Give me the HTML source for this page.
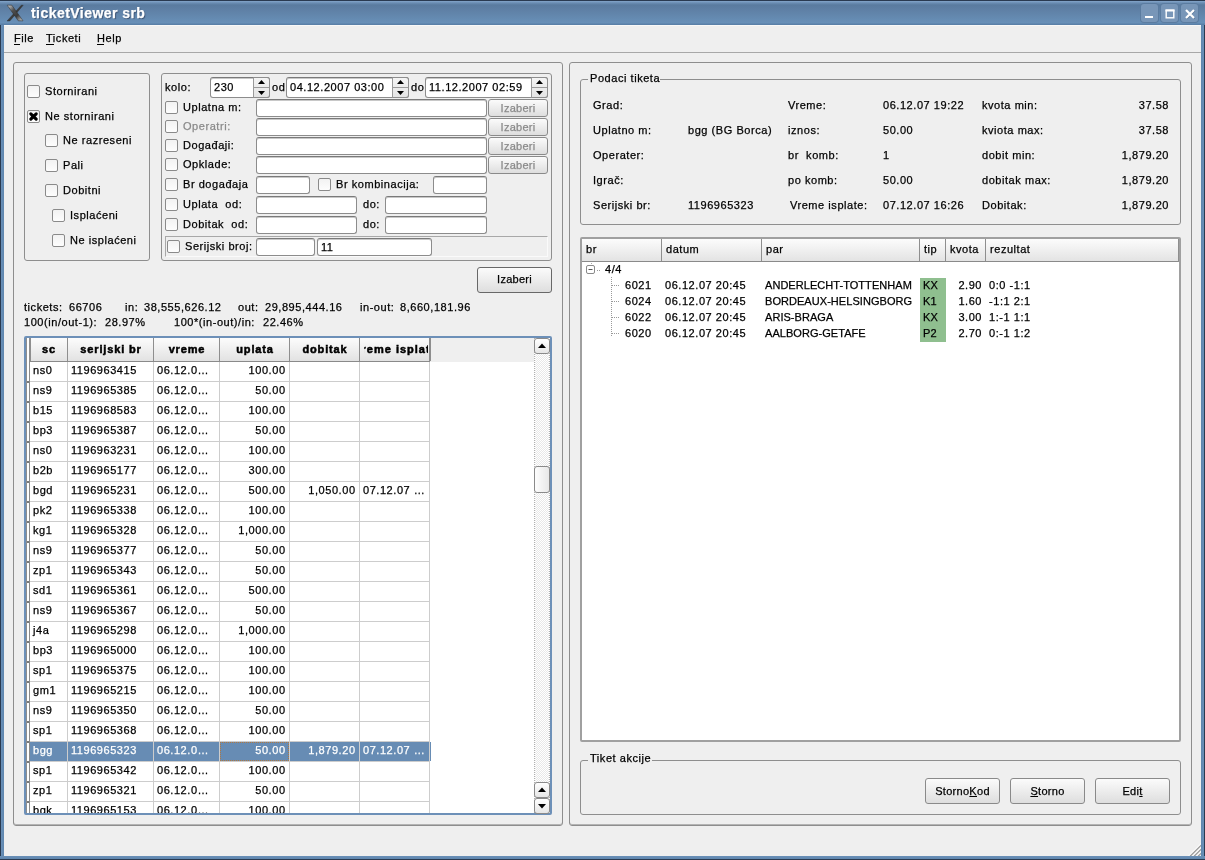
<!DOCTYPE html><html><head><meta charset="utf-8"><style>
html,body{margin:0;padding:0}
body{width:1205px;height:860px;overflow:hidden;position:relative;background:#efefef;font-family:"Liberation Sans",sans-serif;font-size:12px}
.t{position:absolute;white-space:pre;-webkit-text-stroke:0.25px currentColor}
.cb{position:absolute;width:11px;height:11px;border:1px solid #8a8a8a;border-radius:2px;background:linear-gradient(#f2f2f2,#fdfdfd)}
.le{position:absolute;border:1px solid #8c8c8c;border-top-color:#7a7a7a;border-radius:3px;background:#fff;box-shadow:inset 0 1px 0 #c8c8c8}
.btn{position:absolute;border:1px solid #8a8a8a;border-radius:3px;background:linear-gradient(#fbfbfb,#dedede)}
.gb{position:absolute;border:1px solid #8e8e8e;border-radius:3px}
</style></head><body><div style="position:absolute;left:0;top:0;width:1205px;height:860px;will-change:transform">
<div style="position:absolute;left:0px;top:0px;width:1205px;height:25px;background:linear-gradient(#2a3a50 0px,#2a3a50 1px,#83a5ca 1px,#6a8cb2 3px,#5a7b9f 5px,#5e7fa4 9px,#6890b8 23px,#5a80a8 24px,#5a80a8 25px)"></div>
<div style="position:absolute;left:0px;top:25px;width:4px;height:835px;background:linear-gradient(90deg,#2a3a50 0,#2a3a50 1px,#6a90b8 1px,#5f86ae 4px)"></div>
<div style="position:absolute;left:1201px;top:25px;width:4px;height:835px;background:linear-gradient(90deg,#5f86ae 0,#6a90b8 3px,#2a3a50 3px)"></div>
<div style="position:absolute;left:0px;top:856px;width:1205px;height:4px;background:linear-gradient(#6a90b8 0,#5f86ae 3px,#2a3a50 3px)"></div>
<div style="position:absolute;left:4px;top:25px;width:1197px;height:1px;background:#f8f8f8"></div>
<svg style="position:absolute;left:0px;top:0px" width="30" height="25"><defs><linearGradient id="xg" x1="0" y1="0" x2="1" y2="1"><stop offset="0" stop-color="#d8d8d8"/><stop offset="0.35" stop-color="#505050"/><stop offset="0.65" stop-color="#3a3a3a"/><stop offset="1" stop-color="#cfcfcf"/></linearGradient></defs><path d="M21.3 5.2 L23.2 5.2 L9.8 21 L7 21 Z" fill="#3c3c3c" stroke="#2a2a2a" stroke-width="0.4"/><path d="M7.2 5.2 L11.8 5.2 L23 20.8 L18.3 20.8 Z" fill="url(#xg)" stroke="#2a2a2a" stroke-width="0.5"/></svg>
<div class="t" style="left:31px;top:6px;font:bold 14px/14px 'Liberation Sans',sans-serif;color:#fff;letter-spacing:0.45px;text-shadow:1px 1px 1px #3a5070">ticketViewer srb</div>
<div style="position:absolute;left:1141px;top:4px;width:17px;height:18px;background:#7896b8;border-radius:3px;box-shadow:0 0 0 1px #5b7ca0"></div>
<div style="position:absolute;left:1161px;top:4px;width:17px;height:18px;background:#7896b8;border-radius:3px;box-shadow:0 0 0 1px #5b7ca0"></div>
<div style="position:absolute;left:1181px;top:4px;width:17px;height:18px;background:#7896b8;border-radius:3px;box-shadow:0 0 0 1px #5b7ca0"></div>
<svg style="position:absolute;left:1141px;top:4px" width="17" height="18"><rect x="4" y="12" width="8" height="2" fill="#fff"/></svg>
<svg style="position:absolute;left:1161px;top:4px" width="17" height="18"><rect x="5.2" y="6.2" width="7.6" height="7.6" fill="none" stroke="#fff" stroke-width="1.4"/><rect x="4.5" y="5.5" width="9" height="2" fill="#fff"/></svg>
<svg style="position:absolute;left:1181px;top:4px" width="17" height="18"><path d="M5 6 L13 14 M13 6 L5 14" stroke="#3e5a7a" stroke-width="2" transform="translate(0.6,0.6)" opacity="0.5"/><path d="M5 6 L13 14 M13 6 L5 14" stroke="#fff" stroke-width="2.2"/></svg>
<div class="t" style="left:14px;top:33px;font:normal 11px/11px 'Liberation Sans',sans-serif;color:#000;letter-spacing:0.55px;">File</div>
<div style="position:absolute;left:14px;top:44px;width:6px;height:1px;background:#000"></div>
<div class="t" style="left:46px;top:33px;font:normal 11px/11px 'Liberation Sans',sans-serif;color:#000;letter-spacing:0.55px;">Ticketi</div>
<div style="position:absolute;left:46px;top:44px;width:8px;height:1px;background:#000"></div>
<div class="t" style="left:97px;top:33px;font:normal 11px/11px 'Liberation Sans',sans-serif;color:#000;letter-spacing:0.55px;">Help</div>
<div style="position:absolute;left:97px;top:44px;width:7px;height:1px;background:#000"></div>
<div style="position:absolute;left:4px;top:52px;width:1197px;height:1px;background:#a8a8a8"></div>
<div class="gb" style="left:13px;top:62px;width:548px;height:762px;box-shadow:inset 0 -1px 0 #b4b4b4"></div>
<div class="gb" style="left:24px;top:73px;width:124px;height:186px;"></div>
<div class="cb" style="left:27px;top:85px"></div>
<div class="t" style="left:45px;top:86px;font:normal 11px/11px 'Liberation Sans',sans-serif;color:#000;letter-spacing:0.55px;">Stornirani</div>
<div class="cb" style="left:27px;top:110px"><svg width="13" height="13" style="position:absolute;left:-1px;top:-1px"><path d="M3.8 3.8 L9.2 9.2 M9.2 3.8 L3.8 9.2" stroke="#000" stroke-width="3.1" stroke-linecap="round"/></svg></div>
<div class="t" style="left:45px;top:111px;font:normal 11px/11px 'Liberation Sans',sans-serif;color:#000;letter-spacing:0.55px;">Ne stornirani</div>
<div class="cb" style="left:45px;top:134px"></div>
<div class="t" style="left:63px;top:135px;font:normal 11px/11px 'Liberation Sans',sans-serif;color:#000;letter-spacing:0.55px;">Ne razreseni</div>
<div class="cb" style="left:45px;top:159px"></div>
<div class="t" style="left:63px;top:160px;font:normal 11px/11px 'Liberation Sans',sans-serif;color:#000;letter-spacing:0.55px;">Pali</div>
<div class="cb" style="left:45px;top:184px"></div>
<div class="t" style="left:63px;top:185px;font:normal 11px/11px 'Liberation Sans',sans-serif;color:#000;letter-spacing:0.55px;">Dobitni</div>
<div class="cb" style="left:52px;top:209px"></div>
<div class="t" style="left:70px;top:210px;font:normal 11px/11px 'Liberation Sans',sans-serif;color:#000;letter-spacing:0.55px;">Isplaćeni</div>
<div class="cb" style="left:52px;top:234px"></div>
<div class="t" style="left:70px;top:235px;font:normal 11px/11px 'Liberation Sans',sans-serif;color:#000;letter-spacing:0.55px;">Ne isplaćeni</div>
<div class="gb" style="left:161px;top:73px;width:389px;height:186px;"></div>
<div class="t" style="left:165px;top:82px;font:normal 11px/11px 'Liberation Sans',sans-serif;color:#000;letter-spacing:0.55px;">kolo:</div>
<div class="le" style="left:210px;top:77px;width:58px;height:19px"></div>
<div style="position:absolute;left:253px;top:77px;width:15px;height:19px;border:1px solid #8e8e8e;border-left:1px solid #9a9a9a;border-radius:0 3px 3px 0;background:linear-gradient(#f4f4f4,#e4e4e4)"></div>
<div style="position:absolute;left:253px;top:87px;width:16px;height:1px;background:#9a9a9a"></div>
<svg style="position:absolute;left:253px;top:77px" width="17" height="21"><path d="M5.0 7 L12.0 7 L8.5 3 Z" fill="#000"/><path d="M5.0 14 L12.0 14 L8.5 18 Z" fill="#000"/></svg>
<div class="t" style="left:214px;top:82px;font:normal 11px/11px 'Liberation Sans',sans-serif;color:#000;letter-spacing:0.55px;">230</div>
<div class="t" style="left:272px;top:82px;font:normal 11px/11px 'Liberation Sans',sans-serif;color:#000;letter-spacing:0.55px;">od</div>
<div class="le" style="left:286px;top:77px;width:121px;height:19px"></div>
<div style="position:absolute;left:392px;top:77px;width:15px;height:19px;border:1px solid #8e8e8e;border-left:1px solid #9a9a9a;border-radius:0 3px 3px 0;background:linear-gradient(#f4f4f4,#e4e4e4)"></div>
<div style="position:absolute;left:392px;top:87px;width:16px;height:1px;background:#9a9a9a"></div>
<svg style="position:absolute;left:392px;top:77px" width="17" height="21"><path d="M5.0 7 L12.0 7 L8.5 3 Z" fill="#000"/><path d="M5.0 14 L12.0 14 L8.5 18 Z" fill="#000"/></svg>
<div class="t" style="left:290px;top:82px;font:normal 11px/11px 'Liberation Sans',sans-serif;color:#000;letter-spacing:0.55px;">04.12.2007 03:00</div>
<div class="t" style="left:411px;top:82px;font:normal 11px/11px 'Liberation Sans',sans-serif;color:#000;letter-spacing:0.55px;">do</div>
<div class="le" style="left:425px;top:77px;width:121px;height:19px"></div>
<div style="position:absolute;left:531px;top:77px;width:15px;height:19px;border:1px solid #8e8e8e;border-left:1px solid #9a9a9a;border-radius:0 3px 3px 0;background:linear-gradient(#f4f4f4,#e4e4e4)"></div>
<div style="position:absolute;left:531px;top:87px;width:16px;height:1px;background:#9a9a9a"></div>
<svg style="position:absolute;left:531px;top:77px" width="17" height="21"><path d="M5.0 7 L12.0 7 L8.5 3 Z" fill="#000"/><path d="M5.0 14 L12.0 14 L8.5 18 Z" fill="#000"/></svg>
<div class="t" style="left:429px;top:82px;font:normal 11px/11px 'Liberation Sans',sans-serif;color:#000;letter-spacing:0.55px;">11.12.2007 02:59</div>
<div class="cb" style="left:165px;top:101px"></div>
<div class="t" style="left:183px;top:102px;font:normal 11px/11px 'Liberation Sans',sans-serif;color:#000;letter-spacing:0.55px;">Uplatna m:</div>
<div class="le" style="left:256px;top:99px;width:229px;height:16px"></div>
<div class="btn" style="left:488px;top:99px;width:58px;height:16px;"></div>
<div class="t" style="left:488px;width:60px;text-align:center;top:103px;font:normal 11px/11px 'Liberation Sans',sans-serif;color:#8a8a8a;letter-spacing:0.25px;">Izaberi</div>
<div class="cb" style="left:165px;top:120px"></div>
<div class="t" style="left:183px;top:121px;font:normal 11px/11px 'Liberation Sans',sans-serif;color:#8a8a8a;letter-spacing:0.55px;">Operatri:</div>
<div class="le" style="left:256px;top:118px;width:229px;height:16px"></div>
<div class="btn" style="left:488px;top:118px;width:58px;height:16px;"></div>
<div class="t" style="left:488px;width:60px;text-align:center;top:122px;font:normal 11px/11px 'Liberation Sans',sans-serif;color:#8a8a8a;letter-spacing:0.25px;">Izaberi</div>
<div class="cb" style="left:165px;top:139px"></div>
<div class="t" style="left:183px;top:140px;font:normal 11px/11px 'Liberation Sans',sans-serif;color:#000;letter-spacing:0.55px;">Događaji:</div>
<div class="le" style="left:256px;top:137px;width:229px;height:16px"></div>
<div class="btn" style="left:488px;top:137px;width:58px;height:16px;"></div>
<div class="t" style="left:488px;width:60px;text-align:center;top:141px;font:normal 11px/11px 'Liberation Sans',sans-serif;color:#8a8a8a;letter-spacing:0.25px;">Izaberi</div>
<div class="cb" style="left:165px;top:158px"></div>
<div class="t" style="left:183px;top:159px;font:normal 11px/11px 'Liberation Sans',sans-serif;color:#000;letter-spacing:0.55px;">Opklade:</div>
<div class="le" style="left:256px;top:156px;width:229px;height:16px"></div>
<div class="btn" style="left:488px;top:156px;width:58px;height:16px;"></div>
<div class="t" style="left:488px;width:60px;text-align:center;top:160px;font:normal 11px/11px 'Liberation Sans',sans-serif;color:#8a8a8a;letter-spacing:0.25px;">Izaberi</div>
<div class="cb" style="left:165px;top:178px"></div>
<div class="t" style="left:183px;top:179px;font:normal 11px/11px 'Liberation Sans',sans-serif;color:#000;letter-spacing:0.55px;">Br događaja</div>
<div class="le" style="left:256px;top:176px;width:52px;height:16px"></div>
<div class="cb" style="left:318px;top:178px"></div>
<div class="t" style="left:336px;top:179px;font:normal 11px/11px 'Liberation Sans',sans-serif;color:#000;letter-spacing:0.55px;">Br kombinacija:</div>
<div class="le" style="left:433px;top:176px;width:52px;height:16px"></div>
<div class="cb" style="left:165px;top:198px"></div>
<div class="t" style="left:183px;top:199px;font:normal 11px/11px 'Liberation Sans',sans-serif;color:#000;letter-spacing:0.55px;">Uplata  od:</div>
<div class="le" style="left:256px;top:196px;width:99px;height:16px"></div>
<div class="t" style="left:363px;top:199px;font:normal 11px/11px 'Liberation Sans',sans-serif;color:#000;letter-spacing:0.55px;">do:</div>
<div class="le" style="left:385px;top:196px;width:100px;height:16px"></div>
<div class="cb" style="left:165px;top:218px"></div>
<div class="t" style="left:183px;top:219px;font:normal 11px/11px 'Liberation Sans',sans-serif;color:#000;letter-spacing:0.55px;">Dobitak  od:</div>
<div class="le" style="left:256px;top:216px;width:99px;height:16px"></div>
<div class="t" style="left:363px;top:219px;font:normal 11px/11px 'Liberation Sans',sans-serif;color:#000;letter-spacing:0.55px;">do:</div>
<div class="le" style="left:385px;top:216px;width:100px;height:16px"></div>
<div style="position:absolute;left:165px;top:236px;width:381px;height:19px;border-top:1px solid #a8a8a8;border-left:1px solid #a8a8a8;border-bottom:1px solid #fafafa;border-right:1px solid #fafafa"></div>
<div class="cb" style="left:167px;top:240px"></div>
<div class="t" style="left:185px;top:241px;font:normal 11px/11px 'Liberation Sans',sans-serif;color:#000;letter-spacing:0.55px;">Serijski broj:</div>
<div class="le" style="left:256px;top:238px;width:57px;height:16px"></div>
<div class="le" style="left:317px;top:238px;width:113px;height:16px"></div>
<div class="t" style="left:321px;top:242px;font:normal 11px/11px 'Liberation Sans',sans-serif;color:#000;letter-spacing:0.55px;">11</div>
<div class="btn" style="left:477px;top:267px;width:73px;height:24px;border-color:#686868"></div>
<div class="t" style="left:477px;width:75px;text-align:center;top:274px;font:normal 11px/11px 'Liberation Sans',sans-serif;color:#000;letter-spacing:0.25px;">Izaberi</div>
<div class="t" style="left:24px;top:302px;font:normal 11px/11px 'Liberation Sans',sans-serif;color:#000;letter-spacing:0.55px;">tickets:</div>
<div class="t" style="left:69px;top:302px;font:normal 11px/11px 'Liberation Sans',sans-serif;color:#000;letter-spacing:0.55px;">66706</div>
<div class="t" style="left:125px;top:302px;font:normal 11px/11px 'Liberation Sans',sans-serif;color:#000;letter-spacing:0.55px;">in:</div>
<div class="t" style="left:144px;top:302px;font:normal 11px/11px 'Liberation Sans',sans-serif;color:#000;letter-spacing:0.55px;">38,555,626.12</div>
<div class="t" style="left:238px;top:302px;font:normal 11px/11px 'Liberation Sans',sans-serif;color:#000;letter-spacing:0.55px;">out:</div>
<div class="t" style="left:265px;top:302px;font:normal 11px/11px 'Liberation Sans',sans-serif;color:#000;letter-spacing:0.55px;">29,895,444.16</div>
<div class="t" style="left:360px;top:302px;font:normal 11px/11px 'Liberation Sans',sans-serif;color:#000;letter-spacing:0.55px;">in-out:</div>
<div class="t" style="left:400px;top:302px;font:normal 11px/11px 'Liberation Sans',sans-serif;color:#000;letter-spacing:0.55px;">8,660,181.96</div>
<div class="t" style="left:24px;top:317px;font:normal 11px/11px 'Liberation Sans',sans-serif;color:#000;letter-spacing:0.55px;">100(in/out-1):</div>
<div class="t" style="left:105px;top:317px;font:normal 11px/11px 'Liberation Sans',sans-serif;color:#000;letter-spacing:0.55px;">28.97%</div>
<div class="t" style="left:174px;top:317px;font:normal 11px/11px 'Liberation Sans',sans-serif;color:#000;letter-spacing:0.55px;">100*(in-out)/in:</div>
<div class="t" style="left:263px;top:317px;font:normal 11px/11px 'Liberation Sans',sans-serif;color:#000;letter-spacing:0.55px;">22.46%</div>
<div style="position:absolute;left:24px;top:336px;width:528px;height:479px;box-sizing:border-box;border:2px solid #6d90b8;border-radius:2px;background:#fff"></div>
<div style="position:absolute;left:26px;top:338px;width:508px;height:24px;background:#efefef"></div>
<div style="position:absolute;left:26px;top:338px;width:4px;height:475px;background:#fff"></div>
<div style="position:absolute;left:29px;top:338px;width:1px;height:475px;background:#8a8a8a"></div>
<div style="position:absolute;left:26px;top:338px;width:1px;height:475px;background:#8e8e8e"></div>
<div style="position:absolute;left:30px;top:338px;width:38px;height:23px;background:linear-gradient(#fcfcfc,#e2e2e2)"></div>
<div style="position:absolute;left:67px;top:338px;width:2px;height:23px;background:#8e8e8e"></div>
<div class="t" style="left:30px;width:38px;text-align:center;top:344px;font:bold 11px/11px 'Liberation Sans',sans-serif;color:#000;letter-spacing:0.85px;-webkit-text-stroke:0.5px currentColor;">sc</div>
<div style="position:absolute;left:68px;top:338px;width:86px;height:23px;background:linear-gradient(#fcfcfc,#e2e2e2)"></div>
<div style="position:absolute;left:153px;top:338px;width:2px;height:23px;background:#8e8e8e"></div>
<div class="t" style="left:68px;width:86px;text-align:center;top:344px;font:bold 11px/11px 'Liberation Sans',sans-serif;color:#000;letter-spacing:0.85px;-webkit-text-stroke:0.5px currentColor;">serijski br</div>
<div style="position:absolute;left:154px;top:338px;width:66px;height:23px;background:linear-gradient(#fcfcfc,#e2e2e2)"></div>
<div style="position:absolute;left:219px;top:338px;width:2px;height:23px;background:#8e8e8e"></div>
<div class="t" style="left:154px;width:66px;text-align:center;top:344px;font:bold 11px/11px 'Liberation Sans',sans-serif;color:#000;letter-spacing:0.85px;-webkit-text-stroke:0.5px currentColor;">vreme</div>
<div style="position:absolute;left:220px;top:338px;width:70px;height:23px;background:linear-gradient(#fcfcfc,#e2e2e2)"></div>
<div style="position:absolute;left:289px;top:338px;width:2px;height:23px;background:#8e8e8e"></div>
<div class="t" style="left:220px;width:70px;text-align:center;top:344px;font:bold 11px/11px 'Liberation Sans',sans-serif;color:#000;letter-spacing:0.85px;-webkit-text-stroke:0.5px currentColor;">uplata</div>
<div style="position:absolute;left:290px;top:338px;width:70px;height:23px;background:linear-gradient(#fcfcfc,#e2e2e2)"></div>
<div style="position:absolute;left:359px;top:338px;width:2px;height:23px;background:#8e8e8e"></div>
<div class="t" style="left:290px;width:70px;text-align:center;top:344px;font:bold 11px/11px 'Liberation Sans',sans-serif;color:#000;letter-spacing:0.85px;-webkit-text-stroke:0.5px currentColor;">dobitak</div>
<div style="position:absolute;left:360px;top:338px;width:70px;height:23px;background:linear-gradient(#fcfcfc,#e2e2e2)"></div>
<div style="position:absolute;left:429px;top:338px;width:2px;height:23px;background:#8e8e8e"></div>
<div style="position:absolute;left:364px;top:338px;width:64px;height:23px;overflow:hidden"><div class="t" style="left:-9.6px;top:6px;letter-spacing:1.0px;-webkit-text-stroke:0.5px currentColor;font:bold 11px/11px 'Liberation Sans',sans-serif">vreme isplate</div></div>
<div style="position:absolute;left:30px;top:361px;width:400px;height:1px;background:#8a8a8a"></div>
<div style="position:absolute;left:29px;top:338px;width:2px;height:23px;background:#8e8e8e"></div>
<div style="position:absolute;left:26px;top:362px;width:508px;height:451px;overflow:hidden">
<div style="position:absolute;left:4px;top:19px;width:400px;height:1px;background:#cdcdcd"></div>
<div style="position:absolute;left:41px;top:0px;width:1px;height:20px;background:#cdcdcd"></div>
<div style="position:absolute;left:127px;top:0px;width:1px;height:20px;background:#cdcdcd"></div>
<div style="position:absolute;left:193px;top:0px;width:1px;height:20px;background:#cdcdcd"></div>
<div style="position:absolute;left:263px;top:0px;width:1px;height:20px;background:#cdcdcd"></div>
<div style="position:absolute;left:333px;top:0px;width:1px;height:20px;background:#cdcdcd"></div>
<div style="position:absolute;left:403px;top:0px;width:1px;height:20px;background:#cdcdcd"></div>
<div style="position:absolute;left:1px;top:19px;width:2px;height:2px;background:#7a7a7a"></div>
<div class="t" style="left:7px;top:3px;font:11px/11px 'Liberation Sans',sans-serif;letter-spacing:0.55px;color:#000">ns0</div>
<div class="t" style="left:45px;top:3px;font:11px/11px 'Liberation Sans',sans-serif;letter-spacing:0.55px;color:#000">1196963415</div>
<div class="t" style="left:131px;top:3px;font:11px/11px 'Liberation Sans',sans-serif;letter-spacing:0.55px;color:#000">06.12.0…</div>
<div class="t" style="right:248.45px;top:3px;font:11px/11px 'Liberation Sans',sans-serif;letter-spacing:0.55px;color:#000">100.00</div>
<div style="position:absolute;left:4px;top:39px;width:400px;height:1px;background:#cdcdcd"></div>
<div style="position:absolute;left:41px;top:20px;width:1px;height:20px;background:#cdcdcd"></div>
<div style="position:absolute;left:127px;top:20px;width:1px;height:20px;background:#cdcdcd"></div>
<div style="position:absolute;left:193px;top:20px;width:1px;height:20px;background:#cdcdcd"></div>
<div style="position:absolute;left:263px;top:20px;width:1px;height:20px;background:#cdcdcd"></div>
<div style="position:absolute;left:333px;top:20px;width:1px;height:20px;background:#cdcdcd"></div>
<div style="position:absolute;left:403px;top:20px;width:1px;height:20px;background:#cdcdcd"></div>
<div style="position:absolute;left:1px;top:39px;width:2px;height:2px;background:#7a7a7a"></div>
<div class="t" style="left:7px;top:23px;font:11px/11px 'Liberation Sans',sans-serif;letter-spacing:0.55px;color:#000">ns9</div>
<div class="t" style="left:45px;top:23px;font:11px/11px 'Liberation Sans',sans-serif;letter-spacing:0.55px;color:#000">1196965385</div>
<div class="t" style="left:131px;top:23px;font:11px/11px 'Liberation Sans',sans-serif;letter-spacing:0.55px;color:#000">06.12.0…</div>
<div class="t" style="right:248.45px;top:23px;font:11px/11px 'Liberation Sans',sans-serif;letter-spacing:0.55px;color:#000">50.00</div>
<div style="position:absolute;left:4px;top:59px;width:400px;height:1px;background:#cdcdcd"></div>
<div style="position:absolute;left:41px;top:40px;width:1px;height:20px;background:#cdcdcd"></div>
<div style="position:absolute;left:127px;top:40px;width:1px;height:20px;background:#cdcdcd"></div>
<div style="position:absolute;left:193px;top:40px;width:1px;height:20px;background:#cdcdcd"></div>
<div style="position:absolute;left:263px;top:40px;width:1px;height:20px;background:#cdcdcd"></div>
<div style="position:absolute;left:333px;top:40px;width:1px;height:20px;background:#cdcdcd"></div>
<div style="position:absolute;left:403px;top:40px;width:1px;height:20px;background:#cdcdcd"></div>
<div style="position:absolute;left:1px;top:59px;width:2px;height:2px;background:#7a7a7a"></div>
<div class="t" style="left:7px;top:43px;font:11px/11px 'Liberation Sans',sans-serif;letter-spacing:0.55px;color:#000">b15</div>
<div class="t" style="left:45px;top:43px;font:11px/11px 'Liberation Sans',sans-serif;letter-spacing:0.55px;color:#000">1196968583</div>
<div class="t" style="left:131px;top:43px;font:11px/11px 'Liberation Sans',sans-serif;letter-spacing:0.55px;color:#000">06.12.0…</div>
<div class="t" style="right:248.45px;top:43px;font:11px/11px 'Liberation Sans',sans-serif;letter-spacing:0.55px;color:#000">100.00</div>
<div style="position:absolute;left:4px;top:79px;width:400px;height:1px;background:#cdcdcd"></div>
<div style="position:absolute;left:41px;top:60px;width:1px;height:20px;background:#cdcdcd"></div>
<div style="position:absolute;left:127px;top:60px;width:1px;height:20px;background:#cdcdcd"></div>
<div style="position:absolute;left:193px;top:60px;width:1px;height:20px;background:#cdcdcd"></div>
<div style="position:absolute;left:263px;top:60px;width:1px;height:20px;background:#cdcdcd"></div>
<div style="position:absolute;left:333px;top:60px;width:1px;height:20px;background:#cdcdcd"></div>
<div style="position:absolute;left:403px;top:60px;width:1px;height:20px;background:#cdcdcd"></div>
<div style="position:absolute;left:1px;top:79px;width:2px;height:2px;background:#7a7a7a"></div>
<div class="t" style="left:7px;top:63px;font:11px/11px 'Liberation Sans',sans-serif;letter-spacing:0.55px;color:#000">bp3</div>
<div class="t" style="left:45px;top:63px;font:11px/11px 'Liberation Sans',sans-serif;letter-spacing:0.55px;color:#000">1196965387</div>
<div class="t" style="left:131px;top:63px;font:11px/11px 'Liberation Sans',sans-serif;letter-spacing:0.55px;color:#000">06.12.0…</div>
<div class="t" style="right:248.45px;top:63px;font:11px/11px 'Liberation Sans',sans-serif;letter-spacing:0.55px;color:#000">50.00</div>
<div style="position:absolute;left:4px;top:99px;width:400px;height:1px;background:#cdcdcd"></div>
<div style="position:absolute;left:41px;top:80px;width:1px;height:20px;background:#cdcdcd"></div>
<div style="position:absolute;left:127px;top:80px;width:1px;height:20px;background:#cdcdcd"></div>
<div style="position:absolute;left:193px;top:80px;width:1px;height:20px;background:#cdcdcd"></div>
<div style="position:absolute;left:263px;top:80px;width:1px;height:20px;background:#cdcdcd"></div>
<div style="position:absolute;left:333px;top:80px;width:1px;height:20px;background:#cdcdcd"></div>
<div style="position:absolute;left:403px;top:80px;width:1px;height:20px;background:#cdcdcd"></div>
<div style="position:absolute;left:1px;top:99px;width:2px;height:2px;background:#7a7a7a"></div>
<div class="t" style="left:7px;top:83px;font:11px/11px 'Liberation Sans',sans-serif;letter-spacing:0.55px;color:#000">ns0</div>
<div class="t" style="left:45px;top:83px;font:11px/11px 'Liberation Sans',sans-serif;letter-spacing:0.55px;color:#000">1196963231</div>
<div class="t" style="left:131px;top:83px;font:11px/11px 'Liberation Sans',sans-serif;letter-spacing:0.55px;color:#000">06.12.0…</div>
<div class="t" style="right:248.45px;top:83px;font:11px/11px 'Liberation Sans',sans-serif;letter-spacing:0.55px;color:#000">100.00</div>
<div style="position:absolute;left:4px;top:119px;width:400px;height:1px;background:#cdcdcd"></div>
<div style="position:absolute;left:41px;top:100px;width:1px;height:20px;background:#cdcdcd"></div>
<div style="position:absolute;left:127px;top:100px;width:1px;height:20px;background:#cdcdcd"></div>
<div style="position:absolute;left:193px;top:100px;width:1px;height:20px;background:#cdcdcd"></div>
<div style="position:absolute;left:263px;top:100px;width:1px;height:20px;background:#cdcdcd"></div>
<div style="position:absolute;left:333px;top:100px;width:1px;height:20px;background:#cdcdcd"></div>
<div style="position:absolute;left:403px;top:100px;width:1px;height:20px;background:#cdcdcd"></div>
<div style="position:absolute;left:1px;top:119px;width:2px;height:2px;background:#7a7a7a"></div>
<div class="t" style="left:7px;top:103px;font:11px/11px 'Liberation Sans',sans-serif;letter-spacing:0.55px;color:#000">b2b</div>
<div class="t" style="left:45px;top:103px;font:11px/11px 'Liberation Sans',sans-serif;letter-spacing:0.55px;color:#000">1196965177</div>
<div class="t" style="left:131px;top:103px;font:11px/11px 'Liberation Sans',sans-serif;letter-spacing:0.55px;color:#000">06.12.0…</div>
<div class="t" style="right:248.45px;top:103px;font:11px/11px 'Liberation Sans',sans-serif;letter-spacing:0.55px;color:#000">300.00</div>
<div style="position:absolute;left:4px;top:139px;width:400px;height:1px;background:#cdcdcd"></div>
<div style="position:absolute;left:41px;top:120px;width:1px;height:20px;background:#cdcdcd"></div>
<div style="position:absolute;left:127px;top:120px;width:1px;height:20px;background:#cdcdcd"></div>
<div style="position:absolute;left:193px;top:120px;width:1px;height:20px;background:#cdcdcd"></div>
<div style="position:absolute;left:263px;top:120px;width:1px;height:20px;background:#cdcdcd"></div>
<div style="position:absolute;left:333px;top:120px;width:1px;height:20px;background:#cdcdcd"></div>
<div style="position:absolute;left:403px;top:120px;width:1px;height:20px;background:#cdcdcd"></div>
<div style="position:absolute;left:1px;top:139px;width:2px;height:2px;background:#7a7a7a"></div>
<div class="t" style="left:7px;top:123px;font:11px/11px 'Liberation Sans',sans-serif;letter-spacing:0.55px;color:#000">bgd</div>
<div class="t" style="left:45px;top:123px;font:11px/11px 'Liberation Sans',sans-serif;letter-spacing:0.55px;color:#000">1196965231</div>
<div class="t" style="left:131px;top:123px;font:11px/11px 'Liberation Sans',sans-serif;letter-spacing:0.55px;color:#000">06.12.0…</div>
<div class="t" style="right:248.45px;top:123px;font:11px/11px 'Liberation Sans',sans-serif;letter-spacing:0.55px;color:#000">500.00</div>
<div class="t" style="right:178.45px;top:123px;font:11px/11px 'Liberation Sans',sans-serif;letter-spacing:0.55px;color:#000">1,050.00</div>
<div class="t" style="left:337px;top:123px;font:11px/11px 'Liberation Sans',sans-serif;letter-spacing:0.55px;color:#000">07.12.07 …</div>
<div style="position:absolute;left:4px;top:159px;width:400px;height:1px;background:#cdcdcd"></div>
<div style="position:absolute;left:41px;top:140px;width:1px;height:20px;background:#cdcdcd"></div>
<div style="position:absolute;left:127px;top:140px;width:1px;height:20px;background:#cdcdcd"></div>
<div style="position:absolute;left:193px;top:140px;width:1px;height:20px;background:#cdcdcd"></div>
<div style="position:absolute;left:263px;top:140px;width:1px;height:20px;background:#cdcdcd"></div>
<div style="position:absolute;left:333px;top:140px;width:1px;height:20px;background:#cdcdcd"></div>
<div style="position:absolute;left:403px;top:140px;width:1px;height:20px;background:#cdcdcd"></div>
<div style="position:absolute;left:1px;top:159px;width:2px;height:2px;background:#7a7a7a"></div>
<div class="t" style="left:7px;top:143px;font:11px/11px 'Liberation Sans',sans-serif;letter-spacing:0.55px;color:#000">pk2</div>
<div class="t" style="left:45px;top:143px;font:11px/11px 'Liberation Sans',sans-serif;letter-spacing:0.55px;color:#000">1196965338</div>
<div class="t" style="left:131px;top:143px;font:11px/11px 'Liberation Sans',sans-serif;letter-spacing:0.55px;color:#000">06.12.0…</div>
<div class="t" style="right:248.45px;top:143px;font:11px/11px 'Liberation Sans',sans-serif;letter-spacing:0.55px;color:#000">100.00</div>
<div style="position:absolute;left:4px;top:179px;width:400px;height:1px;background:#cdcdcd"></div>
<div style="position:absolute;left:41px;top:160px;width:1px;height:20px;background:#cdcdcd"></div>
<div style="position:absolute;left:127px;top:160px;width:1px;height:20px;background:#cdcdcd"></div>
<div style="position:absolute;left:193px;top:160px;width:1px;height:20px;background:#cdcdcd"></div>
<div style="position:absolute;left:263px;top:160px;width:1px;height:20px;background:#cdcdcd"></div>
<div style="position:absolute;left:333px;top:160px;width:1px;height:20px;background:#cdcdcd"></div>
<div style="position:absolute;left:403px;top:160px;width:1px;height:20px;background:#cdcdcd"></div>
<div style="position:absolute;left:1px;top:179px;width:2px;height:2px;background:#7a7a7a"></div>
<div class="t" style="left:7px;top:163px;font:11px/11px 'Liberation Sans',sans-serif;letter-spacing:0.55px;color:#000">kg1</div>
<div class="t" style="left:45px;top:163px;font:11px/11px 'Liberation Sans',sans-serif;letter-spacing:0.55px;color:#000">1196965328</div>
<div class="t" style="left:131px;top:163px;font:11px/11px 'Liberation Sans',sans-serif;letter-spacing:0.55px;color:#000">06.12.0…</div>
<div class="t" style="right:248.45px;top:163px;font:11px/11px 'Liberation Sans',sans-serif;letter-spacing:0.55px;color:#000">1,000.00</div>
<div style="position:absolute;left:4px;top:199px;width:400px;height:1px;background:#cdcdcd"></div>
<div style="position:absolute;left:41px;top:180px;width:1px;height:20px;background:#cdcdcd"></div>
<div style="position:absolute;left:127px;top:180px;width:1px;height:20px;background:#cdcdcd"></div>
<div style="position:absolute;left:193px;top:180px;width:1px;height:20px;background:#cdcdcd"></div>
<div style="position:absolute;left:263px;top:180px;width:1px;height:20px;background:#cdcdcd"></div>
<div style="position:absolute;left:333px;top:180px;width:1px;height:20px;background:#cdcdcd"></div>
<div style="position:absolute;left:403px;top:180px;width:1px;height:20px;background:#cdcdcd"></div>
<div style="position:absolute;left:1px;top:199px;width:2px;height:2px;background:#7a7a7a"></div>
<div class="t" style="left:7px;top:183px;font:11px/11px 'Liberation Sans',sans-serif;letter-spacing:0.55px;color:#000">ns9</div>
<div class="t" style="left:45px;top:183px;font:11px/11px 'Liberation Sans',sans-serif;letter-spacing:0.55px;color:#000">1196965377</div>
<div class="t" style="left:131px;top:183px;font:11px/11px 'Liberation Sans',sans-serif;letter-spacing:0.55px;color:#000">06.12.0…</div>
<div class="t" style="right:248.45px;top:183px;font:11px/11px 'Liberation Sans',sans-serif;letter-spacing:0.55px;color:#000">50.00</div>
<div style="position:absolute;left:4px;top:219px;width:400px;height:1px;background:#cdcdcd"></div>
<div style="position:absolute;left:41px;top:200px;width:1px;height:20px;background:#cdcdcd"></div>
<div style="position:absolute;left:127px;top:200px;width:1px;height:20px;background:#cdcdcd"></div>
<div style="position:absolute;left:193px;top:200px;width:1px;height:20px;background:#cdcdcd"></div>
<div style="position:absolute;left:263px;top:200px;width:1px;height:20px;background:#cdcdcd"></div>
<div style="position:absolute;left:333px;top:200px;width:1px;height:20px;background:#cdcdcd"></div>
<div style="position:absolute;left:403px;top:200px;width:1px;height:20px;background:#cdcdcd"></div>
<div style="position:absolute;left:1px;top:219px;width:2px;height:2px;background:#7a7a7a"></div>
<div class="t" style="left:7px;top:203px;font:11px/11px 'Liberation Sans',sans-serif;letter-spacing:0.55px;color:#000">zp1</div>
<div class="t" style="left:45px;top:203px;font:11px/11px 'Liberation Sans',sans-serif;letter-spacing:0.55px;color:#000">1196965343</div>
<div class="t" style="left:131px;top:203px;font:11px/11px 'Liberation Sans',sans-serif;letter-spacing:0.55px;color:#000">06.12.0…</div>
<div class="t" style="right:248.45px;top:203px;font:11px/11px 'Liberation Sans',sans-serif;letter-spacing:0.55px;color:#000">50.00</div>
<div style="position:absolute;left:4px;top:239px;width:400px;height:1px;background:#cdcdcd"></div>
<div style="position:absolute;left:41px;top:220px;width:1px;height:20px;background:#cdcdcd"></div>
<div style="position:absolute;left:127px;top:220px;width:1px;height:20px;background:#cdcdcd"></div>
<div style="position:absolute;left:193px;top:220px;width:1px;height:20px;background:#cdcdcd"></div>
<div style="position:absolute;left:263px;top:220px;width:1px;height:20px;background:#cdcdcd"></div>
<div style="position:absolute;left:333px;top:220px;width:1px;height:20px;background:#cdcdcd"></div>
<div style="position:absolute;left:403px;top:220px;width:1px;height:20px;background:#cdcdcd"></div>
<div style="position:absolute;left:1px;top:239px;width:2px;height:2px;background:#7a7a7a"></div>
<div class="t" style="left:7px;top:223px;font:11px/11px 'Liberation Sans',sans-serif;letter-spacing:0.55px;color:#000">sd1</div>
<div class="t" style="left:45px;top:223px;font:11px/11px 'Liberation Sans',sans-serif;letter-spacing:0.55px;color:#000">1196965361</div>
<div class="t" style="left:131px;top:223px;font:11px/11px 'Liberation Sans',sans-serif;letter-spacing:0.55px;color:#000">06.12.0…</div>
<div class="t" style="right:248.45px;top:223px;font:11px/11px 'Liberation Sans',sans-serif;letter-spacing:0.55px;color:#000">500.00</div>
<div style="position:absolute;left:4px;top:259px;width:400px;height:1px;background:#cdcdcd"></div>
<div style="position:absolute;left:41px;top:240px;width:1px;height:20px;background:#cdcdcd"></div>
<div style="position:absolute;left:127px;top:240px;width:1px;height:20px;background:#cdcdcd"></div>
<div style="position:absolute;left:193px;top:240px;width:1px;height:20px;background:#cdcdcd"></div>
<div style="position:absolute;left:263px;top:240px;width:1px;height:20px;background:#cdcdcd"></div>
<div style="position:absolute;left:333px;top:240px;width:1px;height:20px;background:#cdcdcd"></div>
<div style="position:absolute;left:403px;top:240px;width:1px;height:20px;background:#cdcdcd"></div>
<div style="position:absolute;left:1px;top:259px;width:2px;height:2px;background:#7a7a7a"></div>
<div class="t" style="left:7px;top:243px;font:11px/11px 'Liberation Sans',sans-serif;letter-spacing:0.55px;color:#000">ns9</div>
<div class="t" style="left:45px;top:243px;font:11px/11px 'Liberation Sans',sans-serif;letter-spacing:0.55px;color:#000">1196965367</div>
<div class="t" style="left:131px;top:243px;font:11px/11px 'Liberation Sans',sans-serif;letter-spacing:0.55px;color:#000">06.12.0…</div>
<div class="t" style="right:248.45px;top:243px;font:11px/11px 'Liberation Sans',sans-serif;letter-spacing:0.55px;color:#000">50.00</div>
<div style="position:absolute;left:4px;top:279px;width:400px;height:1px;background:#cdcdcd"></div>
<div style="position:absolute;left:41px;top:260px;width:1px;height:20px;background:#cdcdcd"></div>
<div style="position:absolute;left:127px;top:260px;width:1px;height:20px;background:#cdcdcd"></div>
<div style="position:absolute;left:193px;top:260px;width:1px;height:20px;background:#cdcdcd"></div>
<div style="position:absolute;left:263px;top:260px;width:1px;height:20px;background:#cdcdcd"></div>
<div style="position:absolute;left:333px;top:260px;width:1px;height:20px;background:#cdcdcd"></div>
<div style="position:absolute;left:403px;top:260px;width:1px;height:20px;background:#cdcdcd"></div>
<div style="position:absolute;left:1px;top:279px;width:2px;height:2px;background:#7a7a7a"></div>
<div class="t" style="left:7px;top:263px;font:11px/11px 'Liberation Sans',sans-serif;letter-spacing:0.55px;color:#000">j4a</div>
<div class="t" style="left:45px;top:263px;font:11px/11px 'Liberation Sans',sans-serif;letter-spacing:0.55px;color:#000">1196965298</div>
<div class="t" style="left:131px;top:263px;font:11px/11px 'Liberation Sans',sans-serif;letter-spacing:0.55px;color:#000">06.12.0…</div>
<div class="t" style="right:248.45px;top:263px;font:11px/11px 'Liberation Sans',sans-serif;letter-spacing:0.55px;color:#000">1,000.00</div>
<div style="position:absolute;left:4px;top:299px;width:400px;height:1px;background:#cdcdcd"></div>
<div style="position:absolute;left:41px;top:280px;width:1px;height:20px;background:#cdcdcd"></div>
<div style="position:absolute;left:127px;top:280px;width:1px;height:20px;background:#cdcdcd"></div>
<div style="position:absolute;left:193px;top:280px;width:1px;height:20px;background:#cdcdcd"></div>
<div style="position:absolute;left:263px;top:280px;width:1px;height:20px;background:#cdcdcd"></div>
<div style="position:absolute;left:333px;top:280px;width:1px;height:20px;background:#cdcdcd"></div>
<div style="position:absolute;left:403px;top:280px;width:1px;height:20px;background:#cdcdcd"></div>
<div style="position:absolute;left:1px;top:299px;width:2px;height:2px;background:#7a7a7a"></div>
<div class="t" style="left:7px;top:283px;font:11px/11px 'Liberation Sans',sans-serif;letter-spacing:0.55px;color:#000">bp3</div>
<div class="t" style="left:45px;top:283px;font:11px/11px 'Liberation Sans',sans-serif;letter-spacing:0.55px;color:#000">1196965000</div>
<div class="t" style="left:131px;top:283px;font:11px/11px 'Liberation Sans',sans-serif;letter-spacing:0.55px;color:#000">06.12.0…</div>
<div class="t" style="right:248.45px;top:283px;font:11px/11px 'Liberation Sans',sans-serif;letter-spacing:0.55px;color:#000">100.00</div>
<div style="position:absolute;left:4px;top:319px;width:400px;height:1px;background:#cdcdcd"></div>
<div style="position:absolute;left:41px;top:300px;width:1px;height:20px;background:#cdcdcd"></div>
<div style="position:absolute;left:127px;top:300px;width:1px;height:20px;background:#cdcdcd"></div>
<div style="position:absolute;left:193px;top:300px;width:1px;height:20px;background:#cdcdcd"></div>
<div style="position:absolute;left:263px;top:300px;width:1px;height:20px;background:#cdcdcd"></div>
<div style="position:absolute;left:333px;top:300px;width:1px;height:20px;background:#cdcdcd"></div>
<div style="position:absolute;left:403px;top:300px;width:1px;height:20px;background:#cdcdcd"></div>
<div style="position:absolute;left:1px;top:319px;width:2px;height:2px;background:#7a7a7a"></div>
<div class="t" style="left:7px;top:303px;font:11px/11px 'Liberation Sans',sans-serif;letter-spacing:0.55px;color:#000">sp1</div>
<div class="t" style="left:45px;top:303px;font:11px/11px 'Liberation Sans',sans-serif;letter-spacing:0.55px;color:#000">1196965375</div>
<div class="t" style="left:131px;top:303px;font:11px/11px 'Liberation Sans',sans-serif;letter-spacing:0.55px;color:#000">06.12.0…</div>
<div class="t" style="right:248.45px;top:303px;font:11px/11px 'Liberation Sans',sans-serif;letter-spacing:0.55px;color:#000">100.00</div>
<div style="position:absolute;left:4px;top:339px;width:400px;height:1px;background:#cdcdcd"></div>
<div style="position:absolute;left:41px;top:320px;width:1px;height:20px;background:#cdcdcd"></div>
<div style="position:absolute;left:127px;top:320px;width:1px;height:20px;background:#cdcdcd"></div>
<div style="position:absolute;left:193px;top:320px;width:1px;height:20px;background:#cdcdcd"></div>
<div style="position:absolute;left:263px;top:320px;width:1px;height:20px;background:#cdcdcd"></div>
<div style="position:absolute;left:333px;top:320px;width:1px;height:20px;background:#cdcdcd"></div>
<div style="position:absolute;left:403px;top:320px;width:1px;height:20px;background:#cdcdcd"></div>
<div style="position:absolute;left:1px;top:339px;width:2px;height:2px;background:#7a7a7a"></div>
<div class="t" style="left:7px;top:323px;font:11px/11px 'Liberation Sans',sans-serif;letter-spacing:0.55px;color:#000">gm1</div>
<div class="t" style="left:45px;top:323px;font:11px/11px 'Liberation Sans',sans-serif;letter-spacing:0.55px;color:#000">1196965215</div>
<div class="t" style="left:131px;top:323px;font:11px/11px 'Liberation Sans',sans-serif;letter-spacing:0.55px;color:#000">06.12.0…</div>
<div class="t" style="right:248.45px;top:323px;font:11px/11px 'Liberation Sans',sans-serif;letter-spacing:0.55px;color:#000">100.00</div>
<div style="position:absolute;left:4px;top:359px;width:400px;height:1px;background:#cdcdcd"></div>
<div style="position:absolute;left:41px;top:340px;width:1px;height:20px;background:#cdcdcd"></div>
<div style="position:absolute;left:127px;top:340px;width:1px;height:20px;background:#cdcdcd"></div>
<div style="position:absolute;left:193px;top:340px;width:1px;height:20px;background:#cdcdcd"></div>
<div style="position:absolute;left:263px;top:340px;width:1px;height:20px;background:#cdcdcd"></div>
<div style="position:absolute;left:333px;top:340px;width:1px;height:20px;background:#cdcdcd"></div>
<div style="position:absolute;left:403px;top:340px;width:1px;height:20px;background:#cdcdcd"></div>
<div style="position:absolute;left:1px;top:359px;width:2px;height:2px;background:#7a7a7a"></div>
<div class="t" style="left:7px;top:343px;font:11px/11px 'Liberation Sans',sans-serif;letter-spacing:0.55px;color:#000">ns9</div>
<div class="t" style="left:45px;top:343px;font:11px/11px 'Liberation Sans',sans-serif;letter-spacing:0.55px;color:#000">1196965350</div>
<div class="t" style="left:131px;top:343px;font:11px/11px 'Liberation Sans',sans-serif;letter-spacing:0.55px;color:#000">06.12.0…</div>
<div class="t" style="right:248.45px;top:343px;font:11px/11px 'Liberation Sans',sans-serif;letter-spacing:0.55px;color:#000">50.00</div>
<div style="position:absolute;left:4px;top:379px;width:400px;height:1px;background:#cdcdcd"></div>
<div style="position:absolute;left:41px;top:360px;width:1px;height:20px;background:#cdcdcd"></div>
<div style="position:absolute;left:127px;top:360px;width:1px;height:20px;background:#cdcdcd"></div>
<div style="position:absolute;left:193px;top:360px;width:1px;height:20px;background:#cdcdcd"></div>
<div style="position:absolute;left:263px;top:360px;width:1px;height:20px;background:#cdcdcd"></div>
<div style="position:absolute;left:333px;top:360px;width:1px;height:20px;background:#cdcdcd"></div>
<div style="position:absolute;left:403px;top:360px;width:1px;height:20px;background:#cdcdcd"></div>
<div style="position:absolute;left:1px;top:379px;width:2px;height:2px;background:#7a7a7a"></div>
<div class="t" style="left:7px;top:363px;font:11px/11px 'Liberation Sans',sans-serif;letter-spacing:0.55px;color:#000">sp1</div>
<div class="t" style="left:45px;top:363px;font:11px/11px 'Liberation Sans',sans-serif;letter-spacing:0.55px;color:#000">1196965368</div>
<div class="t" style="left:131px;top:363px;font:11px/11px 'Liberation Sans',sans-serif;letter-spacing:0.55px;color:#000">06.12.0…</div>
<div class="t" style="right:248.45px;top:363px;font:11px/11px 'Liberation Sans',sans-serif;letter-spacing:0.55px;color:#000">100.00</div>
<div style="position:absolute;left:4px;top:380px;width:401px;height:19px;background:#678cb4"></div>
<div style="position:absolute;left:194px;top:380px;width:67px;height:17px;border:1px dotted #b07840"></div>
<div style="position:absolute;left:4px;top:399px;width:400px;height:1px;background:#cdcdcd"></div>
<div style="position:absolute;left:41px;top:380px;width:1px;height:20px;background:#cdcdcd"></div>
<div style="position:absolute;left:127px;top:380px;width:1px;height:20px;background:#cdcdcd"></div>
<div style="position:absolute;left:193px;top:380px;width:1px;height:20px;background:#cdcdcd"></div>
<div style="position:absolute;left:263px;top:380px;width:1px;height:20px;background:#cdcdcd"></div>
<div style="position:absolute;left:333px;top:380px;width:1px;height:20px;background:#cdcdcd"></div>
<div style="position:absolute;left:403px;top:380px;width:1px;height:20px;background:#cdcdcd"></div>
<div style="position:absolute;left:1px;top:399px;width:2px;height:2px;background:#7a7a7a"></div>
<div class="t" style="left:7px;top:383px;font:11px/11px 'Liberation Sans',sans-serif;letter-spacing:0.55px;color:#fff">bgg</div>
<div class="t" style="left:45px;top:383px;font:11px/11px 'Liberation Sans',sans-serif;letter-spacing:0.55px;color:#fff">1196965323</div>
<div class="t" style="left:131px;top:383px;font:11px/11px 'Liberation Sans',sans-serif;letter-spacing:0.55px;color:#fff">06.12.0…</div>
<div class="t" style="right:248.45px;top:383px;font:11px/11px 'Liberation Sans',sans-serif;letter-spacing:0.55px;color:#fff">50.00</div>
<div class="t" style="right:178.45px;top:383px;font:11px/11px 'Liberation Sans',sans-serif;letter-spacing:0.55px;color:#fff">1,879.20</div>
<div class="t" style="left:337px;top:383px;font:11px/11px 'Liberation Sans',sans-serif;letter-spacing:0.55px;color:#fff">07.12.07 …</div>
<div style="position:absolute;left:4px;top:419px;width:400px;height:1px;background:#cdcdcd"></div>
<div style="position:absolute;left:41px;top:400px;width:1px;height:20px;background:#cdcdcd"></div>
<div style="position:absolute;left:127px;top:400px;width:1px;height:20px;background:#cdcdcd"></div>
<div style="position:absolute;left:193px;top:400px;width:1px;height:20px;background:#cdcdcd"></div>
<div style="position:absolute;left:263px;top:400px;width:1px;height:20px;background:#cdcdcd"></div>
<div style="position:absolute;left:333px;top:400px;width:1px;height:20px;background:#cdcdcd"></div>
<div style="position:absolute;left:403px;top:400px;width:1px;height:20px;background:#cdcdcd"></div>
<div style="position:absolute;left:1px;top:419px;width:2px;height:2px;background:#7a7a7a"></div>
<div class="t" style="left:7px;top:403px;font:11px/11px 'Liberation Sans',sans-serif;letter-spacing:0.55px;color:#000">sp1</div>
<div class="t" style="left:45px;top:403px;font:11px/11px 'Liberation Sans',sans-serif;letter-spacing:0.55px;color:#000">1196965342</div>
<div class="t" style="left:131px;top:403px;font:11px/11px 'Liberation Sans',sans-serif;letter-spacing:0.55px;color:#000">06.12.0…</div>
<div class="t" style="right:248.45px;top:403px;font:11px/11px 'Liberation Sans',sans-serif;letter-spacing:0.55px;color:#000">100.00</div>
<div style="position:absolute;left:4px;top:439px;width:400px;height:1px;background:#cdcdcd"></div>
<div style="position:absolute;left:41px;top:420px;width:1px;height:20px;background:#cdcdcd"></div>
<div style="position:absolute;left:127px;top:420px;width:1px;height:20px;background:#cdcdcd"></div>
<div style="position:absolute;left:193px;top:420px;width:1px;height:20px;background:#cdcdcd"></div>
<div style="position:absolute;left:263px;top:420px;width:1px;height:20px;background:#cdcdcd"></div>
<div style="position:absolute;left:333px;top:420px;width:1px;height:20px;background:#cdcdcd"></div>
<div style="position:absolute;left:403px;top:420px;width:1px;height:20px;background:#cdcdcd"></div>
<div style="position:absolute;left:1px;top:439px;width:2px;height:2px;background:#7a7a7a"></div>
<div class="t" style="left:7px;top:423px;font:11px/11px 'Liberation Sans',sans-serif;letter-spacing:0.55px;color:#000">zp1</div>
<div class="t" style="left:45px;top:423px;font:11px/11px 'Liberation Sans',sans-serif;letter-spacing:0.55px;color:#000">1196965321</div>
<div class="t" style="left:131px;top:423px;font:11px/11px 'Liberation Sans',sans-serif;letter-spacing:0.55px;color:#000">06.12.0…</div>
<div class="t" style="right:248.45px;top:423px;font:11px/11px 'Liberation Sans',sans-serif;letter-spacing:0.55px;color:#000">50.00</div>
<div style="position:absolute;left:4px;top:459px;width:400px;height:1px;background:#cdcdcd"></div>
<div style="position:absolute;left:41px;top:440px;width:1px;height:20px;background:#cdcdcd"></div>
<div style="position:absolute;left:127px;top:440px;width:1px;height:20px;background:#cdcdcd"></div>
<div style="position:absolute;left:193px;top:440px;width:1px;height:20px;background:#cdcdcd"></div>
<div style="position:absolute;left:263px;top:440px;width:1px;height:20px;background:#cdcdcd"></div>
<div style="position:absolute;left:333px;top:440px;width:1px;height:20px;background:#cdcdcd"></div>
<div style="position:absolute;left:403px;top:440px;width:1px;height:20px;background:#cdcdcd"></div>
<div style="position:absolute;left:1px;top:459px;width:2px;height:2px;background:#7a7a7a"></div>
<div class="t" style="left:7px;top:443px;font:11px/11px 'Liberation Sans',sans-serif;letter-spacing:0.55px;color:#000">bgk</div>
<div class="t" style="left:45px;top:443px;font:11px/11px 'Liberation Sans',sans-serif;letter-spacing:0.55px;color:#000">1196965153</div>
<div class="t" style="left:131px;top:443px;font:11px/11px 'Liberation Sans',sans-serif;letter-spacing:0.55px;color:#000">06.12.0…</div>
<div class="t" style="right:248.45px;top:443px;font:11px/11px 'Liberation Sans',sans-serif;letter-spacing:0.55px;color:#000">100.00</div>
</div>
<div style="position:absolute;left:534px;top:338px;width:16px;height:475px;background:repeating-conic-gradient(#e8e8e8 0 25%,#ffffff 0 50%) 0 0/2px 2px"></div>
<div style="position:absolute;left:534px;top:338px;width:1px;height:475px;background:repeating-linear-gradient(#b0b0b0 0,#b0b0b0 1px,#fff 1px,#fff 2px)"></div>
<div style="position:absolute;left:549px;top:338px;width:1px;height:475px;background:repeating-linear-gradient(#fff 0,#fff 1px,#b0b0b0 1px,#b0b0b0 2px)"></div>
<div style="position:absolute;left:534px;top:338px;width:14px;height:14px;border:1px solid #8a8a8a;border-radius:3px;background:linear-gradient(#ffffff,#e6e6e6)"></div>
<svg style="position:absolute;left:534px;top:338px" width="16" height="16"><path d="M4 10 L12 10 L8 5.5 Z" fill="#000"/></svg>
<div style="position:absolute;left:534px;top:466px;width:14px;height:25px;border:1px solid #8a8a8a;border-radius:3px;background:linear-gradient(90deg,#fdfdfd,#e8e8e8)"></div>
<div style="position:absolute;left:534px;top:782px;width:14px;height:14px;border:1px solid #8a8a8a;border-radius:3px;background:linear-gradient(#ffffff,#e6e6e6)"></div>
<svg style="position:absolute;left:534px;top:782px" width="16" height="16"><path d="M4 10 L12 10 L8 5.5 Z" fill="#000"/></svg>
<div style="position:absolute;left:534px;top:798px;width:14px;height:14px;border:1px solid #8a8a8a;border-radius:3px;background:linear-gradient(#ffffff,#e6e6e6)"></div>
<svg style="position:absolute;left:534px;top:798px" width="16" height="16"><path d="M4 6 L12 6 L8 10.5 Z" fill="#000"/></svg>
<div class="gb" style="left:569px;top:62px;width:621px;height:762px;box-shadow:inset 0 -1px 0 #b4b4b4"></div>
<div class="gb" style="left:580px;top:79px;width:599px;height:144px;"></div>
<div style="position:absolute;left:588px;top:70px;width:72px;height:14px;background:#efefef"></div>
<div class="t" style="left:590px;top:73px;font:normal 11px/11px 'Liberation Sans',sans-serif;color:#000;letter-spacing:0.55px;">Podaci tiketa</div>
<div class="t" style="left:593px;top:100px;font:normal 11px/11px 'Liberation Sans',sans-serif;color:#000;letter-spacing:0.55px;">Grad:</div>
<div class="t" style="left:593px;top:125px;font:normal 11px/11px 'Liberation Sans',sans-serif;color:#000;letter-spacing:0.55px;">Uplatno m:</div>
<div class="t" style="left:593px;top:150px;font:normal 11px/11px 'Liberation Sans',sans-serif;color:#000;letter-spacing:0.55px;">Operater:</div>
<div class="t" style="left:593px;top:175px;font:normal 11px/11px 'Liberation Sans',sans-serif;color:#000;letter-spacing:0.55px;">Igrač:</div>
<div class="t" style="left:593px;top:200px;font:normal 11px/11px 'Liberation Sans',sans-serif;color:#000;letter-spacing:0.55px;">Serijski br:</div>
<div class="t" style="left:688px;top:125px;font:normal 11px/11px 'Liberation Sans',sans-serif;color:#000;letter-spacing:0.55px;">bgg (BG Borca)</div>
<div class="t" style="left:688px;top:200px;font:normal 11px/11px 'Liberation Sans',sans-serif;color:#000;letter-spacing:0.55px;">1196965323</div>
<div class="t" style="left:788px;top:100px;font:normal 11px/11px 'Liberation Sans',sans-serif;color:#000;letter-spacing:0.55px;">Vreme:</div>
<div class="t" style="left:788px;top:125px;font:normal 11px/11px 'Liberation Sans',sans-serif;color:#000;letter-spacing:0.55px;">iznos:</div>
<div class="t" style="left:788px;top:150px;font:normal 11px/11px 'Liberation Sans',sans-serif;color:#000;letter-spacing:0.55px;">br  komb:</div>
<div class="t" style="left:788px;top:175px;font:normal 11px/11px 'Liberation Sans',sans-serif;color:#000;letter-spacing:0.55px;">po komb:</div>
<div class="t" style="left:790px;top:200px;font:normal 11px/11px 'Liberation Sans',sans-serif;color:#000;letter-spacing:0.55px;">Vreme isplate:</div>
<div class="t" style="left:883px;top:100px;font:normal 11px/11px 'Liberation Sans',sans-serif;color:#000;letter-spacing:0.55px;">06.12.07 19:22</div>
<div class="t" style="left:883px;top:125px;font:normal 11px/11px 'Liberation Sans',sans-serif;color:#000;letter-spacing:0.55px;">50.00</div>
<div class="t" style="left:883px;top:150px;font:normal 11px/11px 'Liberation Sans',sans-serif;color:#000;letter-spacing:0.55px;">1</div>
<div class="t" style="left:883px;top:175px;font:normal 11px/11px 'Liberation Sans',sans-serif;color:#000;letter-spacing:0.55px;">50.00</div>
<div class="t" style="left:883px;top:200px;font:normal 11px/11px 'Liberation Sans',sans-serif;color:#000;letter-spacing:0.55px;">07.12.07 16:26</div>
<div class="t" style="left:982px;top:100px;font:normal 11px/11px 'Liberation Sans',sans-serif;color:#000;letter-spacing:0.55px;">kvota min:</div>
<div class="t" style="left:982px;top:125px;font:normal 11px/11px 'Liberation Sans',sans-serif;color:#000;letter-spacing:0.55px;">kviota max:</div>
<div class="t" style="left:982px;top:150px;font:normal 11px/11px 'Liberation Sans',sans-serif;color:#000;letter-spacing:0.55px;">dobit min:</div>
<div class="t" style="left:982px;top:175px;font:normal 11px/11px 'Liberation Sans',sans-serif;color:#000;letter-spacing:0.55px;">dobitak max:</div>
<div class="t" style="left:982px;top:200px;font:normal 11px/11px 'Liberation Sans',sans-serif;color:#000;letter-spacing:0.55px;">Dobitak:</div>
<div class="t" style="right:36px;top:100px;font:normal 11px/11px 'Liberation Sans',sans-serif;color:#000;letter-spacing:0.55px;">37.58</div>
<div class="t" style="right:36px;top:125px;font:normal 11px/11px 'Liberation Sans',sans-serif;color:#000;letter-spacing:0.55px;">37.58</div>
<div class="t" style="right:36px;top:150px;font:normal 11px/11px 'Liberation Sans',sans-serif;color:#000;letter-spacing:0.55px;">1,879.20</div>
<div class="t" style="right:36px;top:175px;font:normal 11px/11px 'Liberation Sans',sans-serif;color:#000;letter-spacing:0.55px;">1,879.20</div>
<div class="t" style="right:36px;top:200px;font:normal 11px/11px 'Liberation Sans',sans-serif;color:#000;letter-spacing:0.55px;">1,879.20</div>
<div style="position:absolute;left:580px;top:237px;width:601px;height:505px;box-sizing:border-box;border:2px solid #a0a0a0;border-radius:2px;background:#fff"></div>
<div style="position:absolute;left:582px;top:239px;width:80px;height:23px;background:linear-gradient(#fcfcfc,#e2e2e2)"></div>
<div style="position:absolute;left:661px;top:239px;width:2px;height:23px;background:#8e8e8e"></div>
<div class="t" style="left:586px;top:244px;font:normal 11px/11px 'Liberation Sans',sans-serif;color:#000;letter-spacing:0.55px;">br</div>
<div style="position:absolute;left:662px;top:239px;width:100px;height:23px;background:linear-gradient(#fcfcfc,#e2e2e2)"></div>
<div style="position:absolute;left:761px;top:239px;width:2px;height:23px;background:#8e8e8e"></div>
<div class="t" style="left:666px;top:244px;font:normal 11px/11px 'Liberation Sans',sans-serif;color:#000;letter-spacing:0.55px;">datum</div>
<div style="position:absolute;left:762px;top:239px;width:158px;height:23px;background:linear-gradient(#fcfcfc,#e2e2e2)"></div>
<div style="position:absolute;left:919px;top:239px;width:2px;height:23px;background:#8e8e8e"></div>
<div class="t" style="left:766px;top:244px;font:normal 11px/11px 'Liberation Sans',sans-serif;color:#000;letter-spacing:0.55px;">par</div>
<div style="position:absolute;left:920px;top:239px;width:26px;height:23px;background:linear-gradient(#fcfcfc,#e2e2e2)"></div>
<div style="position:absolute;left:945px;top:239px;width:2px;height:23px;background:#8e8e8e"></div>
<div class="t" style="left:924px;top:244px;font:normal 11px/11px 'Liberation Sans',sans-serif;color:#000;letter-spacing:0.55px;">tip</div>
<div style="position:absolute;left:946px;top:239px;width:40px;height:23px;background:linear-gradient(#fcfcfc,#e2e2e2)"></div>
<div style="position:absolute;left:985px;top:239px;width:2px;height:23px;background:#8e8e8e"></div>
<div class="t" style="left:950px;top:244px;font:normal 11px/11px 'Liberation Sans',sans-serif;color:#000;letter-spacing:0.55px;">kvota</div>
<div style="position:absolute;left:986px;top:239px;width:193px;height:23px;background:linear-gradient(#fcfcfc,#e2e2e2)"></div>
<div class="t" style="left:990px;top:244px;font:normal 11px/11px 'Liberation Sans',sans-serif;color:#000;letter-spacing:0.55px;">rezultat</div>
<div style="position:absolute;left:582px;top:261px;width:597px;height:1px;background:#8a8a8a"></div>
<div style="position:absolute;left:1178px;top:239px;width:1px;height:23px;background:#8e8e8e"></div>
<svg style="position:absolute;left:584px;top:263px" width="40" height="80"><rect x="2.5" y="2.5" width="8" height="8" rx="1.5" fill="#fff" stroke="#8a8a8a"/><path d="M4.5 6.5 H8.5" stroke="#555"/><path d="M13 7.5 H17" stroke="#9a9a9a" stroke-dasharray="1 1"/><path d="M7.5 0 V2" stroke="#aaa" stroke-dasharray="1 1"/><path d="M27.5 14 V74" stroke="#9a9a9a" stroke-dasharray="1 1"/><path d="M28 22.5 H36" stroke="#9a9a9a" stroke-dasharray="1 1"/><path d="M28 38.5 H36" stroke="#9a9a9a" stroke-dasharray="1 1"/><path d="M28 54.5 H36" stroke="#9a9a9a" stroke-dasharray="1 1"/><path d="M28 70.5 H36" stroke="#9a9a9a" stroke-dasharray="1 1"/></svg>
<div class="t" style="left:605px;top:264px;font:normal 11px/11px 'Liberation Sans',sans-serif;color:#000;letter-spacing:0.55px;">4/4</div>
<div style="position:absolute;left:920px;top:278px;width:26px;height:64px;background:#8fbf8f"></div>
<div class="t" style="left:625px;top:280px;font:normal 11px/11px 'Liberation Sans',sans-serif;color:#000;letter-spacing:0.55px;">6021</div>
<div class="t" style="left:665px;top:280px;font:normal 11px/11px 'Liberation Sans',sans-serif;color:#000;letter-spacing:0.55px;">06.12.07 20:45</div>
<div class="t" style="left:765px;top:280px;font:normal 11px/11px 'Liberation Sans',sans-serif;color:#000;letter-spacing:0.05px;">ANDERLECHT-TOTTENHAM</div>
<div class="t" style="left:923px;top:280px;font:normal 11px/11px 'Liberation Sans',sans-serif;color:#000;letter-spacing:0.2px;">KX</div>
<div class="t" style="right:223px;top:280px;font:normal 11px/11px 'Liberation Sans',sans-serif;color:#000;letter-spacing:0.55px;">2.90</div>
<div class="t" style="left:989px;top:280px;font:normal 11px/11px 'Liberation Sans',sans-serif;color:#000;letter-spacing:0.55px;">0:0 -1:1</div>
<div class="t" style="left:625px;top:296px;font:normal 11px/11px 'Liberation Sans',sans-serif;color:#000;letter-spacing:0.55px;">6024</div>
<div class="t" style="left:665px;top:296px;font:normal 11px/11px 'Liberation Sans',sans-serif;color:#000;letter-spacing:0.55px;">06.12.07 20:45</div>
<div class="t" style="left:765px;top:296px;font:normal 11px/11px 'Liberation Sans',sans-serif;color:#000;letter-spacing:0.05px;">BORDEAUX-HELSINGBORG</div>
<div class="t" style="left:923px;top:296px;font:normal 11px/11px 'Liberation Sans',sans-serif;color:#000;letter-spacing:0.2px;">K1</div>
<div class="t" style="right:223px;top:296px;font:normal 11px/11px 'Liberation Sans',sans-serif;color:#000;letter-spacing:0.55px;">1.60</div>
<div class="t" style="left:989px;top:296px;font:normal 11px/11px 'Liberation Sans',sans-serif;color:#000;letter-spacing:0.55px;">-1:1 2:1</div>
<div class="t" style="left:625px;top:312px;font:normal 11px/11px 'Liberation Sans',sans-serif;color:#000;letter-spacing:0.55px;">6022</div>
<div class="t" style="left:665px;top:312px;font:normal 11px/11px 'Liberation Sans',sans-serif;color:#000;letter-spacing:0.55px;">06.12.07 20:45</div>
<div class="t" style="left:765px;top:312px;font:normal 11px/11px 'Liberation Sans',sans-serif;color:#000;letter-spacing:0.05px;">ARIS-BRAGA</div>
<div class="t" style="left:923px;top:312px;font:normal 11px/11px 'Liberation Sans',sans-serif;color:#000;letter-spacing:0.2px;">KX</div>
<div class="t" style="right:223px;top:312px;font:normal 11px/11px 'Liberation Sans',sans-serif;color:#000;letter-spacing:0.55px;">3.00</div>
<div class="t" style="left:989px;top:312px;font:normal 11px/11px 'Liberation Sans',sans-serif;color:#000;letter-spacing:0.55px;">1:-1 1:1</div>
<div class="t" style="left:625px;top:328px;font:normal 11px/11px 'Liberation Sans',sans-serif;color:#000;letter-spacing:0.55px;">6020</div>
<div class="t" style="left:665px;top:328px;font:normal 11px/11px 'Liberation Sans',sans-serif;color:#000;letter-spacing:0.55px;">06.12.07 20:45</div>
<div class="t" style="left:765px;top:328px;font:normal 11px/11px 'Liberation Sans',sans-serif;color:#000;letter-spacing:0.05px;">AALBORG-GETAFE</div>
<div class="t" style="left:923px;top:328px;font:normal 11px/11px 'Liberation Sans',sans-serif;color:#000;letter-spacing:0.2px;">P2</div>
<div class="t" style="right:223px;top:328px;font:normal 11px/11px 'Liberation Sans',sans-serif;color:#000;letter-spacing:0.55px;">2.70</div>
<div class="t" style="left:989px;top:328px;font:normal 11px/11px 'Liberation Sans',sans-serif;color:#000;letter-spacing:0.55px;">0:-1 1:2</div>
<div class="gb" style="left:580px;top:760px;width:599px;height:53px;"></div>
<div style="position:absolute;left:588px;top:752px;width:64px;height:14px;background:#efefef"></div>
<div class="t" style="left:590px;top:753px;font:normal 11px/11px 'Liberation Sans',sans-serif;color:#000;letter-spacing:0.55px;">Tiket akcije</div>
<div class="btn" style="left:925px;top:778px;width:73px;height:24px;"></div>
<div class="t" style="left:925px;width:75px;text-align:center;top:786px;font:normal 11px/11px 'Liberation Sans',sans-serif;color:#000;letter-spacing:0.3px;">Storno<u>K</u>od</div>
<div class="btn" style="left:1010px;top:778px;width:73px;height:24px;"></div>
<div class="t" style="left:1010px;width:75px;text-align:center;top:786px;font:normal 11px/11px 'Liberation Sans',sans-serif;color:#000;letter-spacing:0.3px;"><u>S</u>torno</div>
<div class="btn" style="left:1095px;top:778px;width:73px;height:24px;"></div>
<div class="t" style="left:1095px;width:75px;text-align:center;top:786px;font:normal 11px/11px 'Liberation Sans',sans-serif;color:#000;letter-spacing:0.3px;">Edi<u>t</u></div>
<svg style="position:absolute;left:1187px;top:842px" width="14" height="14"><path d="M1.5 14.5 L14.5 1.5 M5.5 14.5 L14.5 5.5 M9.5 14.5 L14.5 9.5" stroke="#fff" stroke-width="1.3"/><path d="M2.8 14.5 L14.5 2.8 M6.8 14.5 L14.5 6.8 M10.8 14.5 L14.5 10.8" stroke="#9a9a9a" stroke-width="1.3"/></svg>
</div></body></html>
